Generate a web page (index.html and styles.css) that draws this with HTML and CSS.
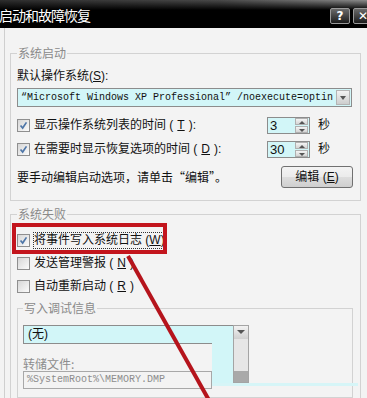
FILE: index.html
```html
<!DOCTYPE html>
<html lang="zh-CN">
<head>
<meta charset="utf-8">
<title>启动和故障恢复</title>
<link rel="stylesheet" href="styles.css">
</head>
<body>
<div class="titlebar">
  <span class="title">启动和故障恢复</span>
  <span class="tbtns">
    <span class="tbtn help">?</span>
    <span class="tbtn close">✕</span>
  </span>
</div>
<div class="page">
  <fieldset class="group g1">
    <legend>系统启动</legend>
    <div class="label">默认操作系统(<u>S</u>):</div>
    <div class="combo wide">
      <span class="combo-text">“Microsoft Windows XP Professional” /noexecute=optin</span>
      <span class="drop"></span>
    </div>
    <div class="spin-row first">
      <span class="check"><span class="cb on"><svg viewBox="0 0 13 13"><path d="M3 6.5 5.5 9.5 10 2.8"/></svg></span>显示操作系统列表的时间 (<u>T</u>):</span>
      <span class="spin"><span class="spin-val">3</span><span class="spin-btns"><span class="sb up"></span><span class="sb down"></span></span></span>
      <span class="unit">秒</span>
    </div>
    <div class="spin-row">
      <span class="check"><span class="cb on"><svg viewBox="0 0 13 13"><path d="M3 6.5 5.5 9.5 10 2.8"/></svg></span>在需要时显示恢复选项的时间 (<u>D</u>):</span>
      <span class="spin"><span class="spin-val">30</span><span class="spin-btns"><span class="sb up"></span><span class="sb down"></span></span></span>
      <span class="unit">秒</span>
    </div>
    <div class="edit-row">
      <span class="cjk">要手动编辑启动选项，请单击“编辑”。</span>
      <span class="btn">编辑 (<u>E</u>)</span>
    </div>
  </fieldset>

  <fieldset class="group g2">
    <legend>系统失败</legend>
    <div class="check crow first"><span class="cb on"><svg viewBox="0 0 13 13"><path d="M3 6.5 5.5 9.5 10 2.8"/></svg></span><span class="focus">将事件写入系统日志 (<u>W</u>)</span></div>
    <div class="check crow"><span class="cb"></span>发送管理警报 (<u>N</u>)</div>
    <div class="check crow"><span class="cb"></span>自动重新启动 (<u>R</u>)</div>
    <fieldset class="group g3">
      <legend>写入调试信息</legend>
      <div class="combo small">
        <span class="combo-cjk">(无)</span>
      </div>
      <div class="dump-label">转储文件:</div>
      <div class="path-input">%SystemRoot%\MEMORY.DMP</div>
    </fieldset>
  </fieldset>
</div>

<div class="dd-fill"></div>
<div class="dd-strip"></div>
<div class="dd-scroll"><span class="dd-arrow"></span><span class="dd-thumb"></span></div>

<div class="redbox"></div>
<svg class="arrow" viewBox="0 0 367 398" width="367" height="398"><line x1="128" y1="256" x2="210" y2="402"/></svg>
</body>
</html>
```

FILE: styles.css
```css
* { box-sizing: border-box; }
html, body { margin: 0; padding: 0; }
body {
  width: 367px;
  height: 398px;
  overflow: hidden;
  position: relative;
  background: #f3f3f3;
  font-family: "Liberation Sans", "Noto Sans CJK SC", sans-serif;
  font-size: 12px;
  line-height: 16px;
  color: #111;
}
.cjk, .title, .group legend, .dump-label { font-family: "Noto Sans CJK SC", "Liberation Sans", sans-serif; }
u { text-decoration: underline; text-underline-offset: 1px; }

/* title bar */
.titlebar {
  height: 28px;
  display: flex;
  align-items: flex-start;
  background:
    linear-gradient(to bottom, rgba(0,0,0,0) 0, #000 10px),
    linear-gradient(to right, #2e2e2e, #4a4a4a 60%, #8c8c8c);
}
.title {
  color: #fff;
  font-size: 14px;
  line-height: 18px;
  letter-spacing: -1px;
  margin: 6px 0 0 -1px;
}
.tbtns { margin-left: auto; margin-top: 8px; margin-right: -6px; display: flex; gap: 3px; }
.tbtn {
  width: 20px;
  height: 16px;
  border: 1px solid #9a9a9a;
  border-radius: 2px;
  background: linear-gradient(#6a6a6a, #1c1c1c);
  color: #fff;
  font: bold 12px/14px "DejaVu Sans", sans-serif;
  text-align: center;
}

/* page */
.page {
  margin-left: 4px;
  border-left: 1px solid #cfcfcf;
  padding-left: 5px;
  height: 370px;
  overflow: hidden;
}
.group {
  margin: 0;
  padding: 0 6px;
  border: 1px solid #d2d2d2;
  min-width: 0;
}
.group legend {
  padding: 0 1px;
  margin-left: 0;
  color: #8a8a8a;
  line-height: 16px;
}
.g1 { width: 351px; margin-top: 17px; padding-top: 7px; padding-bottom: 12px; }
.g2 { width: 351px; margin-top: 5px; padding-top: 9px; padding-bottom: 8px; }
.g3 { width: 336px; margin-top: 5px; padding: 9px 5px 8px; }

.label { height: 16px; }

/* combo boxes */
.combo {
  display: flex;
  align-items: center;
  height: 19px;
  border: 1px solid #8c8c8c;
  background: #d2f6f8;
}
.combo.wide { margin-top: 4px; width: 335px; }
.combo.small { width: 226px; }
.combo-text {
  flex: 1;
  padding-left: 3px;
  font: 10px/17px "Liberation Mono", monospace;
  white-space: nowrap;
  overflow: hidden;
  color: #111;
}
.combo-cjk { padding-left: 4px; line-height: 17px; }
.drop {
  position: relative;
  width: 14px;
  height: 15px;
  margin-right: 1px;
  border: 1px solid #b4b4b4;
  background: linear-gradient(#f2f2f2, #cdcdcd);
}
.drop::after {
  content: "";
  position: absolute;
  left: 3px;
  top: 5px;
  border-left: 3.5px solid transparent;
  border-right: 3.5px solid transparent;
  border-top: 4px solid #555;
}

/* checkboxes */
.check { display: flex; align-items: center; gap: 4px; }
.cb {
  width: 13px;
  height: 13px;
  flex: none;
  border: 1px solid #8f8f8f;
  background: linear-gradient(135deg, #d6d6d6, #fbfbfb);
  display: flex;
}
.cb svg { width: 11px; height: 11px; }
.cb path { fill: none; stroke: #4e76a8; stroke-width: 2; }

/* spin rows */
.spin-row {
  display: grid;
  grid-template-columns: 250px 43px auto;
  align-items: center;
  height: 18px;
  margin-top: 6px;
}
.spin-row.first { margin-top: 9px; }
.spin {
  display: flex;
  height: 17px;
  border: 1px solid #8c8c8c;
  background: #d2f6f8;
}
.spin-val { flex: 1; padding-left: 2px; font-size: 13px; line-height: 15px; }
.spin-btns { width: 14px; display: flex; flex-direction: column; gap: 1px; padding: 0 1px 0 0; }
.sb {
  position: relative;
  flex: 1;
  border: 1px solid #b0b0b0;
  background: linear-gradient(#f4f4f4, #d4d4d4);
}
.sb::after {
  content: "";
  position: absolute;
  left: 3px;
  top: 2px;
  border-left: 3px solid transparent;
  border-right: 3px solid transparent;
}
.sb.up::after { border-bottom: 3px solid #555; }
.sb.down::after { border-top: 3px solid #555; }
.unit { margin-left: 8px; }

/* edit row */
.edit-row {
  display: flex;
  justify-content: space-between;
  align-items: center;
  margin-top: 8px;
  height: 22px;
}
.btn {
  width: 72px;
  height: 22px;
  margin-right: 1px;
  border: 1px solid #707070;
  border-radius: 3px;
  background: linear-gradient(#f3f3f3 0, #ebebeb 50%, #dddddd 51%, #cfcfcf 100%);
  text-align: center;
  line-height: 20px;
}

/* failure group rows */
.crow { height: 18px; margin-top: 4px; }
.crow.first { margin-top: 0; }
.crow + .crow { margin-top: 5px; }
.focus { outline: 1px dotted #333; line-height: 15px; }

.dump-label { margin-top: 13px; line-height: 14px; height: 14px; color: #8d8d8d; }
.path-input {
  width: 189px;
  height: 18px;
  border: 1px solid #a8a8a8;
  padding-left: 3px;
  font: 10px/16px "Liberation Mono", monospace;
  color: #8d8d8d;
}

/* opened dropdown list remnant over the dialog */
.dd-fill { position: absolute; left: 212px; top: 343px; width: 21px; height: 41px; background: #d2f6f8; }
.dd-strip { position: absolute; left: 212px; top: 383px; width: 146px; height: 3px; background: #d6f5f7; }
.dd-scroll {
  position: absolute;
  left: 233px;
  top: 325px;
  width: 16px;
  height: 58px;
  border: 1px solid #a4a4a4;
  background: #e6e6e6;
  display: flex;
  flex-direction: column;
  justify-content: space-between;
}
.dd-arrow {
  position: relative;
  height: 13px;
  background: linear-gradient(#f2f2f2, #d0d0d0);
}
.dd-arrow::after {
  content: "";
  position: absolute;
  left: 3px;
  top: 4px;
  border-left: 4px solid transparent;
  border-right: 4px solid transparent;
  border-top: 4px solid #555;
}
.dd-thumb { height: 11px; background: #a9a9a9; }

/* annotation */
.redbox {
  position: absolute;
  left: 12px;
  top: 223px;
  width: 155px;
  height: 31px;
  border: 4px solid #c3151d;
}
.arrow { position: absolute; left: 0; top: 0; pointer-events: none; }
.arrow line { stroke: #b5141c; stroke-width: 4; }
```
